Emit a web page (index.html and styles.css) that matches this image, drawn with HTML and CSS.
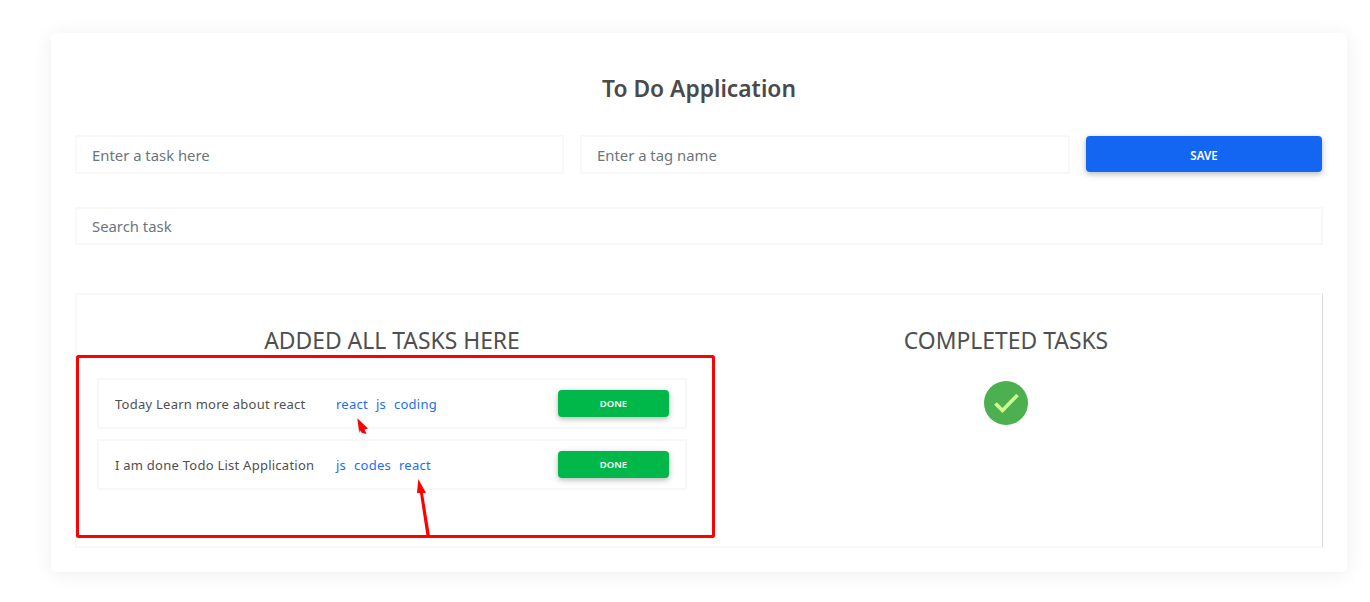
FILE: index.html
```html
<!DOCTYPE html>
<html lang="en">
<head>
<meta charset="utf-8">
<title>To Do Application</title>
<link rel="stylesheet" href="styles.css">
</head>
<body>
<main class="card">
  <h1 class="title">To Do Application</h1>
  <form class="entry-row">
    <input class="field field-entry" type="text" placeholder="Enter a task here">
    <input class="field field-entry" type="text" placeholder="Enter a tag name">
    <button class="btn btn-save" type="button">SAVE</button>
  </form>
  <input class="field field-search" type="text" placeholder="Search task">
  <section class="board">
    <div class="col col-tasks">
      <h2 class="col-title">ADDED ALL TASKS HERE</h2>
      <ul class="task-list">
        <li class="task">
          <span class="task-name task-name-a">Today Learn more about react</span>
          <span class="tags"><a class="tag">react</a><a class="tag">js</a><a class="tag">coding</a></span>
          <button class="btn btn-done" type="button">DONE</button>
        </li>
        <li class="task">
          <span class="task-name task-name-b">I am done Todo List Application</span>
          <span class="tags"><a class="tag">js</a><a class="tag">codes</a><a class="tag">react</a></span>
          <button class="btn btn-done" type="button">DONE</button>
        </li>
      </ul>
    </div>
    <div class="col col-done">
      <h2 class="col-title">COMPLETED TASKS</h2>
      <svg class="done-icon" width="44" height="44" viewBox="0 0 44 44" aria-hidden="true">
        <circle cx="22" cy="22" r="22" fill="#4caf50"/>
        <path d="M11.500 22.500l7 7L33.500 14" fill="none" stroke="#ccff90" stroke-width="3.600"/>
      </svg>
    </div>
  </section>
</main>
<svg class="markup" width="1370" height="602" viewBox="0 0 1370 602" aria-hidden="true">
  <rect x="77.500" y="356.500" width="636" height="180" fill="none" stroke="#fe0000" stroke-width="3" rx="1"/>
  <path d="M357.300 418.300L368 428.500L364.500 429.500L366.700 434L361.700 432.700L359.800 430L359.300 433.500Z" fill="#fe0000"/>
  <path d="M418.300 479L426 493L423 493L430 536L426.500 536L420 493L417 493Z" fill="#fe0000"/>
</svg>
</body>
</html>
```
FILE: styles.css
```css
* { box-sizing: border-box; }
html, body { margin: 0; background: #fff; }
body {
  position: relative;
  height: 602px;
  overflow: hidden;
  padding: 33px 23px 0 51px;
  font-family: "Noto Sans", "Open Sans", sans-serif;
  color: #4f4f4f;
}
.card {
  height: 539px;
  padding: 0 24px;
  background: #fff;
  border-radius: 5px;
  box-shadow: 0 2px 20px rgba(0, 0, 0, 0.07);
}
.title {
  margin: 0;
  padding-top: 38px;
  height: 102px;
  font-size: 22.800px;
  line-height: 35px;
  font-weight: 600;
  text-align: center;
  color: #4a4a4a;
}
.entry-row {
  display: grid;
  grid-template-columns: 489px 490px 236px;
  align-items: start;
  gap: 16px;
}
.field {
  display: block;
  min-width: 0;
  height: 38px;
  padding: 0 15px;
  border: 2px solid #f8f8f8;
  background: #fff;
  outline: none;
  font: 14.850px "Noto Sans", "Open Sans", sans-serif;
  color: #4f4f4f;
}
.field::placeholder { color: #6c757d; opacity: 1; }
.field-entry { height: 39px; }
.field-search {
  width: 100%;
  margin-top: 33px;
}
.btn {
  border: 0;
  border-radius: 4px;
  color: #fff;
  font-family: "Noto Sans", "Open Sans", sans-serif;
  font-weight: 600;
}
.btn-save {
  height: 36px;
  margin-top: 1px;
  padding-top: 3px;
  background: #1266f1;
  font-size: 11.600px;
  box-shadow: 0 2px 5px rgba(0, 0, 0, 0.2), 0 2px 10px rgba(0, 0, 0, 0.1);
}
.board {
  display: flex;
  height: 255px;
  margin-top: 48px;
  border: 2px solid #f8f8f8;
  border-right: 1px solid #d9d9d9;
}
.col-tasks {
  flex: 0 0 632px;
  padding: 0 22px 0 20px;
}
.col-done {
  flex: 0 0 594px;
  display: flex;
  flex-direction: column;
  align-items: center;
}
.col-title {
  margin: 0;
  padding-top: 29px;
  height: 83px;
  font-size: 22.900px;
  line-height: 34px;
  font-weight: 400;
  text-align: center;
  color: #4f4f4f;
}
.done-icon { display: block; margin-top: 3px; }
.task-list {
  list-style: none;
  margin: 0;
  padding: 0;
}
.task {
  display: flex;
  align-items: center;
  height: 51px;
  padding: 0 16px 0 15px;
  border: 2px solid #f8f8f8;
  margin-bottom: 10px;
  font-size: 13px;
}
.task-name { padding-left: 1px; letter-spacing: 0.25px; }
.task-name-a { width: 222px; }
.task-name-b { width: 222px; }
.tags {
  display: flex;
  gap: 8px;
  flex: 1;
}
.tag { color: #1b6ff5; letter-spacing: 0.25px; }
.btn-done {
  width: 111px;
  height: 27px;
  background: #00b74a;
  font-size: 9.500px;
  box-shadow: 0 2px 5px rgba(0, 0, 0, 0.2), 0 2px 10px rgba(0, 0, 0, 0.1);
}
.markup {
  position: absolute;
  left: 0;
  top: 0;
  pointer-events: none;
}
```
